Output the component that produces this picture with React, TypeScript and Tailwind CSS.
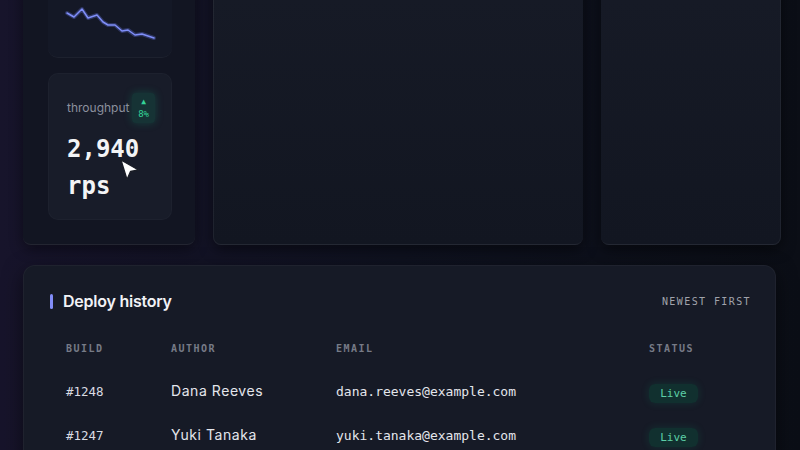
import React from "react";

const mono = { fontFamily: '"DejaVu Sans Mono", "Liberation Mono", monospace' };
const sans = { fontFamily: 'Inter, "Noto Sans", sans-serif' };

const deploys = [
  { build: "#1248", author: "Dana Reeves", email: "dana.reeves@example.com", status: "Live" },
  { build: "#1247", author: "Yuki Tanaka", email: "yuki.tanaka@example.com", status: "Live" },
];

function Sparkline() {
  const pts = "1,4 8,8 16,0 22,9 31,6 37,13 42,16 49,16 56,22 62,21 69,26 76,25 82,27 88,29";
  return (
    <svg width="90" height="32" viewBox="0 0 90 32" className="overflow-visible">
      <polyline points={pts} fill="none" stroke="#6d7ff2" strokeOpacity="0.3" strokeWidth="4" strokeLinejoin="round" strokeLinecap="round" />
      <polyline points={pts} fill="none" stroke="#7f8ef8" strokeWidth="1.5" strokeLinejoin="round" strokeLinecap="round" />
    </svg>
  );
}

function Cursor() {
  return (
    <svg width="24" height="26" viewBox="0 0 24 26" className="absolute left-[119px] top-[158px]">
      <path d="M2 2 L19.5 12 L11.5 13.5 L8 21.5 Z" fill="#ffffff" stroke="#1a1d26" strokeWidth="1.3" strokeLinejoin="round" />
    </svg>
  );
}

export default function App() {
  return (
    <div className="relative w-[800px] h-[450px] overflow-hidden bg-gradient-to-r from-[#17142b] via-[#0f1220] to-[#0b0e16]" style={sans}>
      <div className="-mt-[60px] px-[23px] flex flex-col gap-[20px]">
        <div className="flex gap-[18px] h-[305px]">
          {/* metrics column */}
          <div className="w-[172px] shrink-0 rounded-b-lg bg-[#121522] border-b border-white/[0.07] shadow-[0_4px_14px_rgba(0,0,0,0.45)] pl-[25px] pr-[23px] flex flex-col gap-[15px]">
            <div className="h-[118px] rounded-b-[10px] bg-[#141826] border-b border-white/[0.04] flex flex-col justify-end pl-[18px] pb-[16px]">
              <Sparkline />
            </div>
            <div className="h-[147px] rounded-[10px] bg-[#181c29] border border-white/[0.025] pl-[18px] pr-[16px] pt-[19px]">
              <div className="flex justify-between items-start">
                <span className="text-[12px] text-[#8c909e] mt-[6px]">throughput</span>
                <span className="flex flex-col items-center rounded-[4px] bg-[#10b981]/15 px-[6px] py-[2px] text-[9px] leading-[13px] text-[#34d399] shadow-[0_0_8px_rgba(16,185,129,0.25)]" style={mono}>
                  <span className="text-[8px]">▲</span>
                  <span>8%</span>
                </span>
              </div>
              <div className="mt-[8px] text-[24px] leading-[37px] font-bold text-[#f3f4f6]" style={mono}>
                2,940 rps
              </div>
            </div>
          </div>
          {/* chart panel */}
          <div className="w-[370px] shrink-0 rounded-b-lg bg-gradient-to-b from-[#171b27] to-[#121621] border-l border-b border-white/[0.06] shadow-[0_4px_14px_rgba(0,0,0,0.5)]" />
          {/* side panel */}
          <div className="w-[180px] shrink-0 rounded-b-lg bg-gradient-to-b from-[#171b27] to-[#121621] border-b border-r border-white/[0.06] shadow-[0_4px_14px_rgba(0,0,0,0.5)]" />
        </div>

        {/* deploy history */}
        <div className="w-[753px] rounded-xl bg-[#161a26] border border-white/[0.04] px-[26px] pt-[24px] pb-4 shadow-[0_6px_20px_rgba(0,0,0,0.5)]">
          <div className="flex items-center justify-between h-[22px]">
            <div className="flex items-center gap-[10px]">
              <span className="w-[3px] h-[15px] rounded-full bg-[#818cf8]" />
              <span className="text-[16px] font-semibold text-[#f1f2f6] tracking-[-0.015em]">Deploy history</span>
            </div>
            <span className="text-[10px] tracking-[0.14em] text-[#a0a3ab] mr-[-2px]" style={mono}>NEWEST FIRST</span>
          </div>
          <div className="mt-[14px] px-[16px]">
            <div className="grid grid-cols-[105px_165px_313px_1fr] h-[44px] items-center text-[10px] font-bold tracking-[0.15em] text-[#777b87]" style={mono}>
              <span>BUILD</span>
              <span>AUTHOR</span>
              <span>EMAIL</span>
              <span>STATUS</span>
            </div>
            {deploys.map((d) => (
              <div key={d.build} className="grid grid-cols-[105px_165px_313px_1fr] h-[44px] items-center">
                <span className="text-[12.5px] text-[#d9dce3]" style={mono}>{d.build}</span>
                <span className="text-[14px] leading-[18px] tracking-[0.04em] text-[#e4e6ec] -mt-[2px]">{d.author}</span>
                <span className="text-[13px] text-[#e4e6ec]" style={mono}>{d.email}</span>
                <span className="-mt-[2px]">
                  <span className="inline-flex items-center justify-center w-[49px] h-[19px] rounded-md bg-[#0f3b33]/70 text-[11px] text-[#5ccfa7] shadow-[0_0_8px_rgba(16,185,129,0.15)]" style={mono}>
                    {d.status}
                  </span>
                </span>
              </div>
            ))}
          </div>
        </div>
      </div>
      <Cursor />
    </div>
  );
}
